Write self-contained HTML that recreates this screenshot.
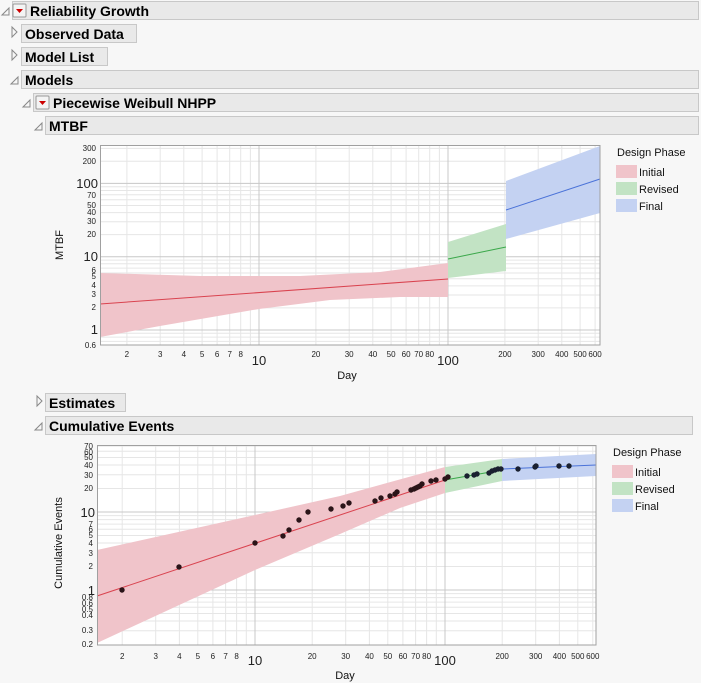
<!DOCTYPE html>
<html><head><meta charset="utf-8"><style>
body{margin:0;background:#f7f7f7;width:701px;height:683px;overflow:hidden;font-family:"Liberation Sans",sans-serif}
svg{display:block}
.h{font-weight:bold;font-size:14px;fill:#000}
.s{font-size:8px;fill:#222}
.b{font-size:13px;fill:#222}
.l{font-size:11px;fill:#111}
</style></head><body>
<svg width="701" height="683" viewBox="0 0 701 683">
<defs>
<g id="dd"><rect x="0" y="0" width="13" height="13" fill="#f4f4f4" stroke="#999" rx="1"/><path d="M3 5 L10 5 L6.5 9 Z" fill="#c00"/></g>
</defs>
<!-- headers -->
<g stroke="#c8c8c8" fill="#e9e9e9">
<rect x="12.5" y="1.5" width="686" height="18"/>
<rect x="21.5" y="24.5" width="115" height="18"/>
<rect x="21.5" y="47.5" width="86" height="18"/>
<rect x="21.5" y="70.5" width="677" height="18"/>
<rect x="33.5" y="93.5" width="665" height="18"/>
<rect x="45.5" y="116.5" width="653" height="18"/>
<rect x="45.5" y="393.5" width="80" height="18"/>
<rect x="45.5" y="416.5" width="647" height="18"/>
</g>
<g fill="none" stroke="#888">
<path d="M2 15 L9 8 L9 15 Z"/>
<path d="M12 27 L17 32 L12 37 Z"/>
<path d="M12 50 L17 55 L12 60 Z"/>
<path d="M11 84 L18 77 L18 84 Z"/>
<path d="M23 107 L30 100 L30 107 Z"/>
<path d="M35 130 L42 123 L42 130 Z"/>
<path d="M37 396 L42 401 L37 406 Z"/>
<path d="M35 430 L42 423 L42 430 Z"/>
</g>
<use href="#dd" x="13" y="4"/>
<use href="#dd" x="36" y="96"/>
<text class="h" x="30" y="16">Reliability Growth</text>
<text class="h" x="25" y="39">Observed Data</text>
<text class="h" x="25" y="62">Model List</text>
<text class="h" x="25" y="85">Models</text>
<text class="h" x="53" y="108">Piecewise Weibull NHPP</text>
<text class="h" x="49" y="131">MTBF</text>
<text class="h" x="49" y="408">Estimates</text>
<text class="h" x="49" y="431">Cumulative Events</text>

<!-- TOP CHART -->
<rect x="100" y="145" width="500" height="200" fill="#fff"/>
<path fill="none" stroke="#e6e6e6" d="M126.9 145V345M160.2 145V345M183.8 145V345M202.1 145V345M217.1 145V345M229.7 145V345M240.7 145V345M250.4 145V345M315.9 145V345M349.2 145V345M372.8 145V345M391.1 145V345M406.1 145V345M418.7 145V345M429.7 145V345M439.4 145V345M504.9 145V345M538.2 145V345M561.8 145V345M580.1 145V345M595.1 145V345
M100 341.4H600M100 337.1H600M100 333.3H600M100 307.9H600M100 295H600M100 285.9H600M100 278.8H600M100 273H600M100 268.1H600M100 263.8H600M100 260.1H600M100 234.6H600M100 221.7H600M100 212.6H600M100 205.5H600M100 199.7H600M100 194.8H600M100 190.5H600M100 186.8H600M100 161.3H600M100 148.4H600"/>
<path fill="none" stroke="#c8c8c8" d="M259 145V345M448 145V345M100 330H600M100 256.7H600M100 183.4H600"/>
<polygon fill="#f0c4ca" points="100,273 200,276 300,276 380,272 448,263 448,297 400,297 330,300 259,309 160,326 100,337"/>
<polygon fill="#c2e3c4" points="448,242 506,224 506,271 448,278"/>
<polygon fill="#c4d2f2" points="506,181 600,146 600,213 506,239"/>
<path stroke="#d9434f" d="M100 304L448 279"/>
<path stroke="#3aa84a" d="M448 259L506 247"/>
<path stroke="#4a72d8" d="M506 210L600 179"/>
<rect x="100.5" y="145.5" width="499.5" height="199.5" fill="none" stroke="#a0a0a0"/>
<g class="s" text-anchor="end">
<text x="96" y="151">300</text><text x="96" y="164">200</text>
<text x="96" y="198">70</text><text x="96" y="208">50</text><text x="96" y="215">40</text><text x="96" y="224">30</text><text x="96" y="237">20</text>
<text x="96" y="273">6</text><text x="96" y="279">5</text><text x="96" y="288">4</text><text x="96" y="297">3</text><text x="96" y="310">2</text>
<text x="96" y="348">0.6</text>
</g>
<g class="b" text-anchor="end"><text x="98" y="188">100</text><text x="98" y="261">10</text><text x="98" y="334">1</text></g>
<g class="s" text-anchor="middle">
<text x="126.9" y="357">2</text><text x="160.2" y="357">3</text><text x="183.8" y="357">4</text><text x="202.1" y="357">5</text><text x="217.1" y="357">6</text><text x="229.7" y="357">7</text><text x="240.7" y="357">8</text>
<text x="315.9" y="357">20</text><text x="349.2" y="357">30</text><text x="372.8" y="357">40</text><text x="391.1" y="357">50</text><text x="406.1" y="357">60</text><text x="418.7" y="357">70</text><text x="429.7" y="357">80</text>
<text x="504.9" y="357">200</text><text x="538.2" y="357">300</text><text x="561.8" y="357">400</text><text x="580.1" y="357">500</text><text x="595.1" y="357">600</text>
</g>
<g class="b" text-anchor="middle"><text x="259" y="365">10</text><text x="448" y="365">100</text></g>
<text class="l" x="347" y="379" text-anchor="middle">Day</text>
<text class="l" x="0" y="0" text-anchor="middle" transform="translate(63,245) rotate(-90)">MTBF</text>
<text class="l" x="617" y="156">Design Phase</text>
<rect x="616" y="165" width="21" height="13" fill="#f0c4ca"/><text class="l" x="639" y="176">Initial</text>
<rect x="616" y="182" width="21" height="13" fill="#c2e3c4"/><text class="l" x="639" y="193">Revised</text>
<rect x="616" y="199" width="21" height="13" fill="#c4d2f2"/><text class="l" x="639" y="210">Final</text>

<!-- BOTTOM CHART -->
<rect x="97" y="445" width="499" height="200" fill="#fff"/>
<path fill="none" stroke="#e6e6e6" d="M122.2 445V645M155.7 445V645M179.4 445V645M197.8 445V645M212.9 445V645M225.6 445V645M236.6 445V645M246.3 445V645M312.2 445V645M345.7 445V645M369.4 445V645M387.8 445V645M402.9 445V645M415.6 445V645M426.6 445V645M436.3 445V645M502.2 445V645M535.7 445V645M559.4 445V645M577.8 445V645M592.8 445V645
M97 630.8H596M97 621H596M97 613.5H596M97 607.3H596M97 602.1H596M97 597.6H596M97 593.6H596M97 566.5H596M97 552.8H596M97 543H596M97 535.5H596M97 529.3H596M97 524.1H596M97 519.6H596M97 515.6H596M97 488.5H596M97 474.8H596M97 465H596M97 457.5H596M97 451.3H596M97 446.1H596"/>
<path fill="none" stroke="#c8c8c8" d="M255 445V645M445 445V645M97 590H596M97 512H596"/>
<polygon fill="#f0c4ca" points="97,550 255,515 340,496 445,467 445,493 400,508 340,534 255,570 97,643"/>
<polygon fill="#c2e3c4" points="445,467 502,459 502,481 445,493"/>
<polygon fill="#c4d2f2" points="502,459 596,454 596,476 502,481"/>
<path stroke="#d9434f" d="M97 596L445 480"/>
<path stroke="#3aa84a" d="M445 480L502 470"/>
<path stroke="#4a72d8" d="M502 469L596 465"/>
<g fill="#2a1418">
<circle cx="122" cy="590" r="2.7"/><circle cx="179" cy="567" r="2.7"/><circle cx="255" cy="543" r="2.7"/><circle cx="283" cy="536" r="2.7"/><circle cx="289" cy="530" r="2.7"/><circle cx="299" cy="520" r="2.7"/><circle cx="308" cy="512" r="2.7"/><circle cx="331" cy="509" r="2.7"/><circle cx="343" cy="506" r="2.7"/><circle cx="349" cy="503" r="2.7"/><circle cx="375" cy="501" r="2.7"/><circle cx="381" cy="498" r="2.7"/><circle cx="390" cy="496" r="2.7"/><circle cx="395" cy="494" r="2.7"/><circle cx="397" cy="492" r="2.7"/><circle cx="411" cy="490" r="2.7"/><circle cx="414" cy="489" r="2.7"/><circle cx="416" cy="488" r="2.7"/><circle cx="418" cy="487" r="2.7"/><circle cx="420" cy="486" r="2.7"/><circle cx="422" cy="484" r="2.7"/><circle cx="431" cy="481" r="2.7"/><circle cx="436" cy="480" r="2.7"/><circle cx="445" cy="479" r="2.7"/><circle cx="448" cy="477" r="2.7"/>
</g>
<g fill="#1a2030">
<circle cx="467" cy="476" r="2.7"/><circle cx="474" cy="475" r="2.7"/><circle cx="477" cy="474" r="2.7"/><circle cx="489" cy="473" r="2.7"/><circle cx="492" cy="471" r="2.7"/><circle cx="495" cy="470" r="2.7"/><circle cx="498" cy="469" r="2.7"/><circle cx="501" cy="469" r="2.7"/><circle cx="518" cy="469" r="2.7"/><circle cx="535" cy="467" r="2.7"/><circle cx="536" cy="466" r="2.7"/><circle cx="559" cy="466" r="2.7"/><circle cx="569" cy="466" r="2.7"/>
</g>
<rect x="97.5" y="445.5" width="498.5" height="199.5" fill="none" stroke="#a0a0a0"/>
<g class="s" text-anchor="end">
<text x="93" y="449">70</text><text x="93" y="455">60</text><text x="93" y="460">50</text><text x="93" y="468">40</text><text x="93" y="478">30</text><text x="93" y="491">20</text>
<text x="93" y="527">7</text><text x="93" y="532">6</text><text x="93" y="538">5</text><text x="93" y="546">4</text><text x="93" y="556">3</text><text x="93" y="569">2</text>
<text x="93" y="600">0.8</text><text x="93" y="606">0.6</text><text x="93" y="612">0.5</text><text x="93" y="618">0.4</text><text x="93" y="633">0.3</text><text x="93" y="647">0.2</text>
</g>
<g class="b" text-anchor="end"><text x="95" y="517">10</text><text x="95" y="595">1</text></g>
<g class="s" text-anchor="middle">
<text x="122.2" y="659">2</text><text x="155.7" y="659">3</text><text x="179.4" y="659">4</text><text x="197.8" y="659">5</text><text x="212.9" y="659">6</text><text x="225.6" y="659">7</text><text x="236.6" y="659">8</text>
<text x="312.2" y="659">20</text><text x="345.7" y="659">30</text><text x="369.4" y="659">40</text><text x="387.8" y="659">50</text><text x="402.9" y="659">60</text><text x="415.6" y="659">70</text><text x="426.6" y="659">80</text>
<text x="502.2" y="659">200</text><text x="535.7" y="659">300</text><text x="559.4" y="659">400</text><text x="577.8" y="659">500</text><text x="592.8" y="659">600</text>
</g>
<g class="b" text-anchor="middle"><text x="255" y="665">10</text><text x="445" y="665">100</text></g>
<text class="l" x="345" y="679" text-anchor="middle">Day</text>
<text class="l" x="0" y="0" text-anchor="middle" transform="translate(62,543) rotate(-90)">Cumulative Events</text>
<text class="l" x="613" y="456">Design Phase</text>
<rect x="612" y="465" width="21" height="13" fill="#f0c4ca"/><text class="l" x="635" y="476">Initial</text>
<rect x="612" y="482" width="21" height="13" fill="#c2e3c4"/><text class="l" x="635" y="493">Revised</text>
<rect x="612" y="499" width="21" height="13" fill="#c4d2f2"/><text class="l" x="635" y="510">Final</text>
</svg>
</body></html>
